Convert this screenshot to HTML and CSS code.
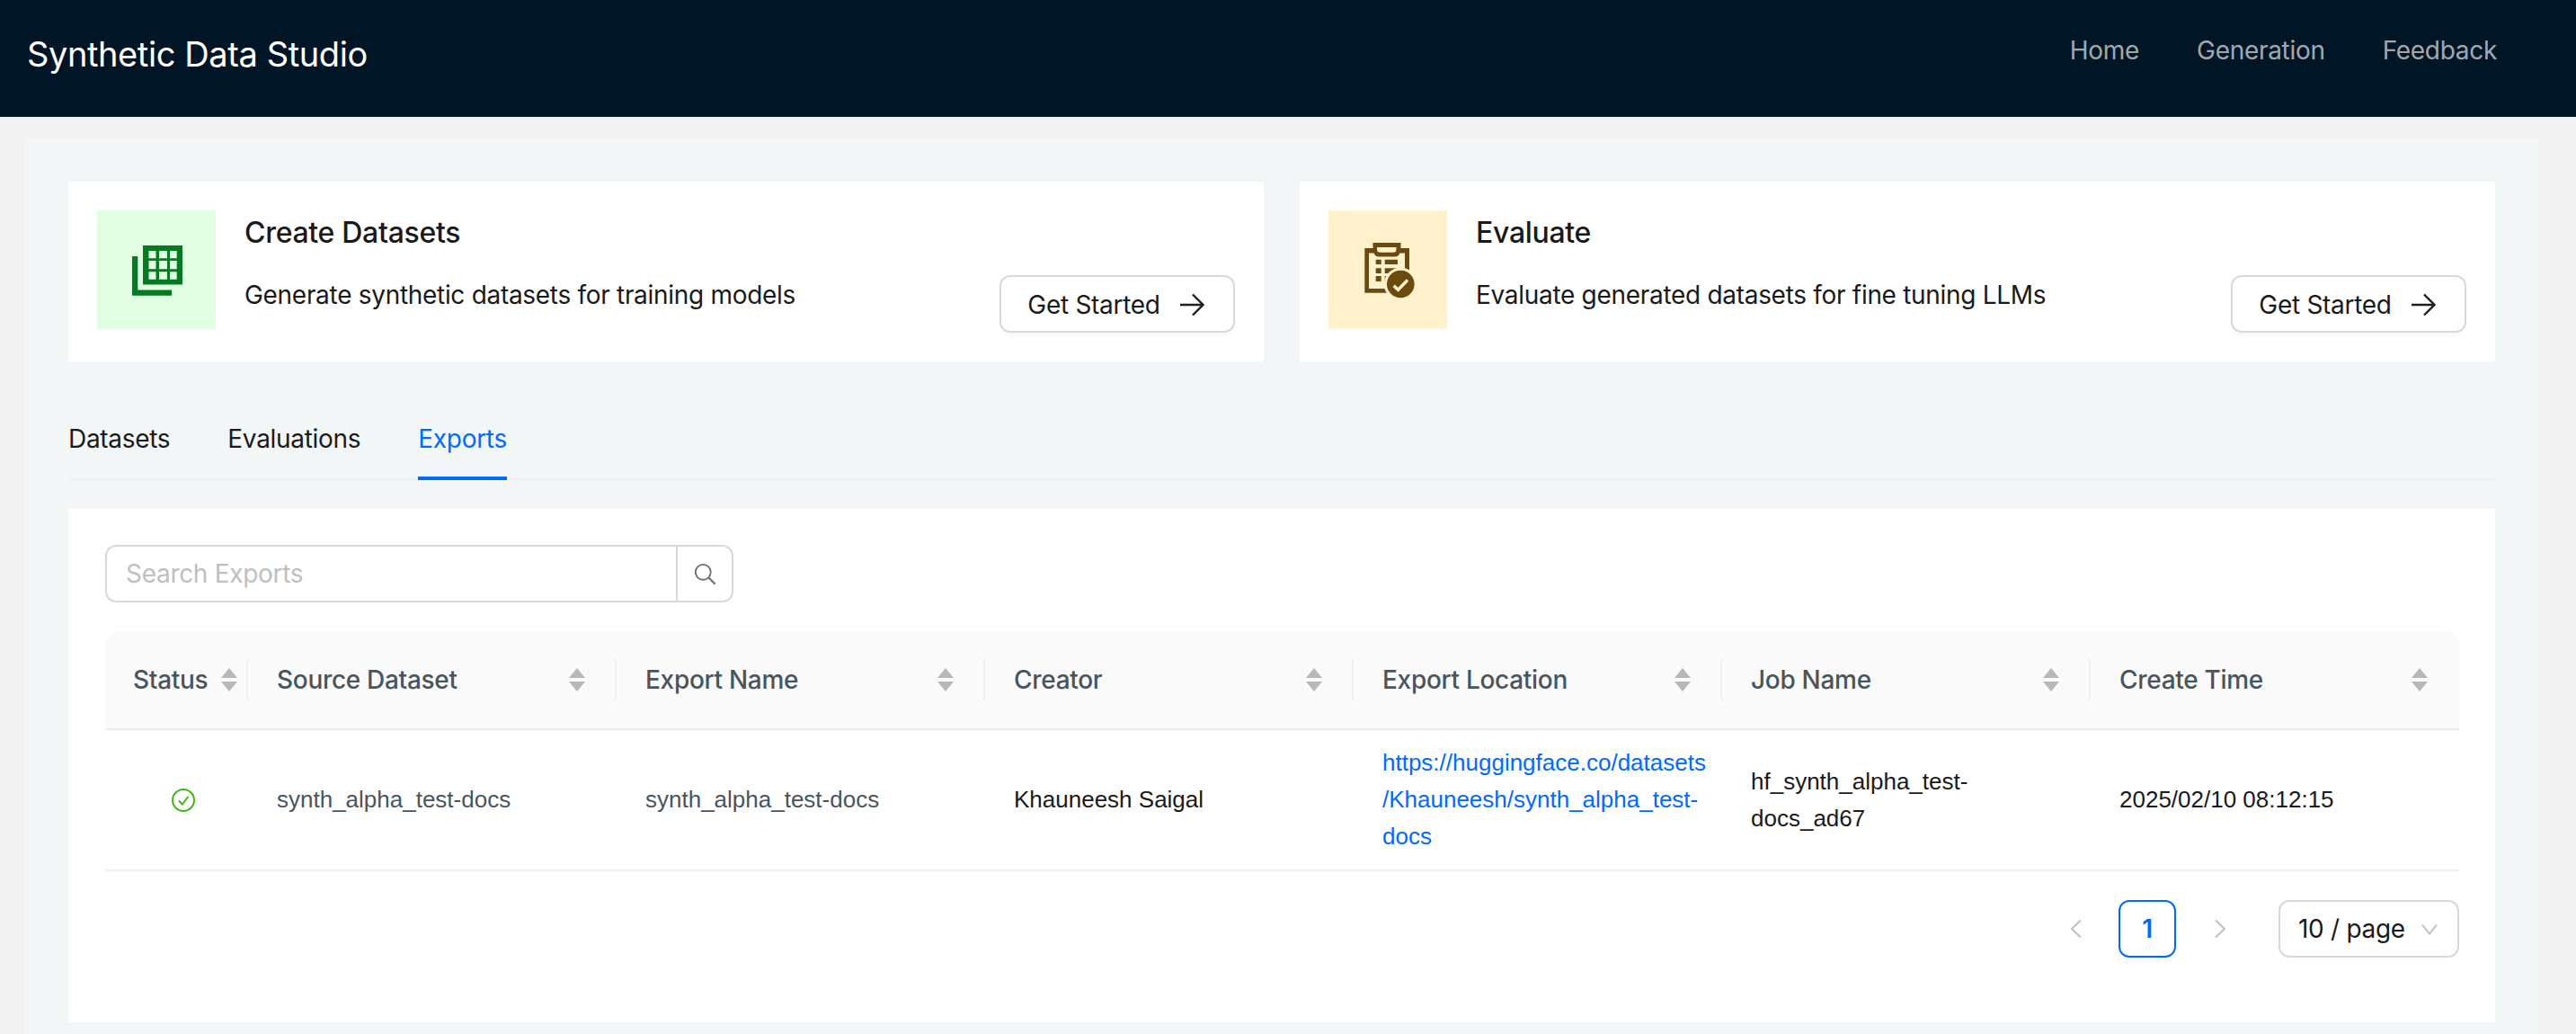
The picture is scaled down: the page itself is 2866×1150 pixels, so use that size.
FILE: index.html
```html
<!DOCTYPE html>
<html lang="en">
<head>
    <meta charset="UTF-8">
    <meta name="viewport" content="width=device-width, initial-scale=1.0">
    <title>Synthetic Data Studio</title>
    <link rel="stylesheet" href="styles.css">
</head>
<body>

    <!-- Top bar -->
    <header class="topbar">
        <div class="brand">Synthetic Data Studio</div>
        <nav class="topnav">
            <a>Home</a>
            <a>Generation</a>
            <a>Feedback</a>
        </nav>
    </header>

    <main class="content">

        <!-- Action cards -->
        <section class="cards">
            <div class="card">
                <div class="card-icon card-icon-green">
                    <svg viewBox="0 0 132 132" width="132" height="132">
                        <path fill="#067a23" fill-rule="evenodd" d="M51 39H95V82.500H51ZM57.500 45V53.300H65.500V45ZM69 45V53.300H78V45ZM81 45V53.300H88.700V45ZM57.500 56V65.300H65.500V56ZM69 56V65.300H78V56ZM81 56V65.300H88.700V56ZM57.500 68.300V76.700H65.500V68.300ZM69 68.300V76.700H78V68.300ZM81 68.300V76.700H88.700V68.300Z"/>
                        <path fill="#067a23" d="M39 51H45.300V88.500H83V94.800H39Z"/>
                    </svg>
                </div>
                <div class="card-text">
                    <h3 class="card-title">Create Datasets</h3>
                    <p class="card-desc">Generate synthetic datasets for training models</p>
                </div>
                <button class="start-btn">Get Started
                    <svg viewBox="0 0 28 28" width="28" height="28"><path fill="none" stroke="#1f1f1f" stroke-width="2.400" d="M1 14H26M15 2.500L26.500 14L15 25.500"/></svg>
                </button>
            </div>

            <div class="card">
                <div class="card-icon card-icon-yellow">
                    <svg viewBox="0 0 132 132" width="132" height="132">
                        <path fill="#6b4a10" fill-rule="evenodd" d="M49.500 36H80.500V42H90V91.800H40.300V42H49.500ZM54 41V43.500Q54 46.800 58 46.800H72Q75.500 46.800 75.500 43.500V41ZM45 47.500V87H85V47.500H79.500Q78 51.500 74 51.500H56Q52 51.500 50.500 47.500Z"/>
                        <path fill="#6b4a10" d="M52.700 54.700H58.700V60H52.700ZM62.700 54.700H77V60H62.700ZM52.700 64.300H58.700V70H52.700ZM62.700 64.300H77V70H62.700ZM52.700 73H58.700V79H52.700ZM62.700 73H70V79H62.700Z"/>
                        <circle cx="80.300" cy="82" r="18.500" fill="#fff1cc"/>
                        <circle cx="80.300" cy="82" r="15.300" fill="#6b4a10"/>
                        <path fill="none" stroke="#fff1cc" stroke-width="3.400" d="M72.700 83.800L77.500 88.300L88 77.500"/>
                    </svg>
                </div>
                <div class="card-text">
                    <h3 class="card-title">Evaluate</h3>
                    <p class="card-desc">Evaluate generated datasets for fine tuning LLMs</p>
                </div>
                <button class="start-btn">Get Started
                    <svg viewBox="0 0 28 28" width="28" height="28"><path fill="none" stroke="#1f1f1f" stroke-width="2.400" d="M1 14H26M15 2.500L26.500 14L15 25.500"/></svg>
                </button>
            </div>
        </section>

        <!-- Tabs -->
        <div class="tabs">
            <a class="tab">Datasets</a>
            <a class="tab">Evaluations</a>
            <a class="tab tab-active">Exports</a>
        </div>

        <!-- Exports panel -->
        <section class="panel">
            <div class="search">
                <input class="search-input" type="text" placeholder="Search Exports">
                <button class="search-btn">
                    <svg viewBox="0 0 28 28" width="25" height="25"><circle cx="11.500" cy="11.500" r="9.500" fill="none" stroke="#6e6e6e" stroke-width="2"/><path stroke="#6e6e6e" stroke-width="2.400" d="M18.500 18.500L26.500 26.500"/></svg>
                </button>
            </div>

            <table class="exports">
                <thead>
                    <tr>
                        <th class="col-status"><div class="th-inner">Status<span class="sorter"></span></div></th>
                        <th><div class="th-inner">Source Dataset<span class="sorter"></span></div></th>
                        <th><div class="th-inner">Export Name<span class="sorter"></span></div></th>
                        <th><div class="th-inner">Creator<span class="sorter"></span></div></th>
                        <th><div class="th-inner">Export Location<span class="sorter"></span></div></th>
                        <th><div class="th-inner">Job Name<span class="sorter"></span></div></th>
                        <th><div class="th-inner">Create Time<span class="sorter"></span></div></th>
                    </tr>
                </thead>
                <tbody>
                    <tr>
                        <td class="col-status">
                            <svg class="status-ok" viewBox="0 0 26 26" width="26" height="26"><circle cx="13" cy="13" r="12" fill="none" stroke="#3fb618" stroke-width="2"/><path fill="none" stroke="#3fb618" stroke-width="2" d="M8 13.500L11.800 17.500L18.500 9"/></svg>
                        </td>
                        <td class="muted">synth_alpha_test-docs</td>
                        <td class="muted">synth_alpha_test-docs</td>
                        <td>Khauneesh Saigal</td>
                        <td><a class="link">https://huggingface.co/datasets<br>/Khauneesh/synth_alpha_test-<br>docs</a></td>
                        <td>hf_synth_alpha_test-<br>docs_ad67</td>
                        <td>2025/02/10 08:12:15</td>
                    </tr>
                </tbody>
            </table>

            <div class="pager">
                <span class="pager-arrow">
                    <svg viewBox="0 0 14 22" width="14" height="22"><path fill="none" stroke="#bfbfbf" stroke-width="2" d="M12 1.500L2 11L12 20.500"/></svg>
                </span>
                <span class="pager-num">1</span>
                <span class="pager-arrow">
                    <svg viewBox="0 0 14 22" width="14" height="22"><path fill="none" stroke="#bfbfbf" stroke-width="2" d="M2 1.500L12 11L2 20.500"/></svg>
                </span>
                <div class="page-size">10 / page
                    <svg viewBox="0 0 18 13" width="18" height="13"><path fill="none" stroke="#bfbfbf" stroke-width="2" d="M1 1.500L9 11.500L17 1.500"/></svg>
                </div>
            </div>
        </section>
    </main>

</body>
</html>
```

FILE: styles.css
```css
* {
    box-sizing: border-box;
}

body {
    margin: 0;
    background-color: #f2f2f2;
    font-family: Inter, "Liberation Sans", sans-serif;
    font-size: 28px;
    letter-spacing: -0.3px;
    color: #1a1a1a;
    height: 1150px;
    overflow: hidden;
}

.topbar {
    height: 130px;
    background-color: #001525;
    display: flex;
    justify-content: space-between;
    padding: 0 88px 0 30px;
}

.brand {
    color: #fff;
    font-size: 38px;
    letter-spacing: -0.4px;
    line-height: 120px;
}

.topnav {
    display: flex;
    gap: 64px;
    line-height: 112px;
    color: rgba(255, 255, 255, 0.65);
}

.content {
    margin: 24px 42px 0 27px;
    padding: 48px 48px 40px 49px;
    background-color: #f3f6f7;
}

.cards {
    display: grid;
    grid-template-columns: 1fr 1fr;
    gap: 40px;
}

.card {
    height: 200px;
    background: #fff;
    padding: 32px;
    display: flex;
}

.card-icon {
    width: 132px;
    height: 132px;
    flex: none;
}

.card-icon svg {
    display: block;
}

.card-icon-green {
    background-color: #e1ffe3;
}

.card-icon-yellow {
    background-color: #fff1cc;
}

.card-text {
    flex: 1;
    padding: 3px 0 0 32px;
}

.card-title {
    margin: 0 0 25px;
    font-size: 32px;
    font-weight: 500;
    line-height: 44px;
}

.card-desc {
    margin: 0;
    line-height: 44px;
}

.start-btn {
    align-self: flex-end;
    height: 64px;
    width: 262px;
    background: #fff;
    border: 2px solid #d9d9d9;
    border-radius: 12px;
    box-shadow: 0 4px 0 rgba(0, 0, 0, 0.02);
    font: inherit;
    letter-spacing: inherit;
    color: inherit;
    display: flex;
    align-items: center;
    justify-content: center;
    gap: 21px;
    padding: 2px 3px 0 0;
}

.tabs {
    display: flex;
    gap: 64px;
    margin-top: 40px;
    height: 92px;
    border-bottom: 2px solid #f0f0f0;
    align-items: flex-end;
}

.tab {
    line-height: 44px;
    padding-bottom: 20px;
    margin-bottom: -2px;
    border-bottom: 4px solid transparent;
}

.tab-active {
    color: #006aff;
    border-bottom-color: #006aff;
}

.panel {
    margin-top: 32px;
    background: #fff;
    padding: 40px 40px 72px 41px;
}

.search {
    display: flex;
    width: 699px;
    height: 64px;
}

.search-input {
    flex: 1;
    min-width: 0;
    height: 64px;
    border: 2px solid #d9d9d9;
    border-right: none;
    border-radius: 12px 0 0 12px;
    padding: 0 21px;
    font: inherit;
    letter-spacing: inherit;
    outline: none;
}

.search-input::placeholder {
    color: #bfbfbf;
}

.search-btn {
    width: 64px;
    height: 64px;
    background: #fff;
    border: 2px solid #d9d9d9;
    border-radius: 0 12px 12px 0;
    padding: 0;
    display: flex;
    align-items: center;
    justify-content: center;
}

.exports {
    width: 100%;
    margin-top: 32px;
    border-collapse: separate;
    border-spacing: 0;
    table-layout: fixed;
}

.exports th {
    position: relative;
    height: 110px;
    padding: 0 32px;
    background-color: #fafafa;
    border-bottom: 2px solid #ebebeb;
    color: #48555f;
    font-weight: 500;
    font-size: 28px;
    text-align: left;
}

.exports th:first-child {
    border-top-left-radius: 16px;
}

.exports th:last-child {
    border-top-right-radius: 16px;
}

/* column separator */
.exports th:not(:last-child)::after {
    content: "";
    position: absolute;
    right: 0;
    top: 32px;
    height: 44px;
    width: 2px;
    background-color: #f0f0f0;
}

.col-status {
    width: 159px;
}

.exports th.col-status {
    padding: 0 9px 0 31px;
}

.th-inner {
    display: flex;
    align-items: center;
    justify-content: space-between;
}

.sorter {
    width: 18px;
    height: 26px;
    flex: none;
    display: flex;
    flex-direction: column;
    justify-content: space-between;
    margin-right: 3px;
}

.sorter::before,
.sorter::after {
    content: "";
    border-left: 9px solid transparent;
    border-right: 9px solid transparent;
}

.sorter::before {
    border-bottom: 11px solid #b8b8b8;
}

.sorter::after {
    border-top: 11px solid #b8b8b8;
}

.exports td {
    height: 157px;
    padding: 16px 16px 16px 32px;
    border-bottom: 2px solid #f0f0f0;
    font-family: "Liberation Sans", sans-serif;
    font-size: 26px;
    letter-spacing: 0;
    line-height: 41px;
}

.exports td.muted {
    color: #48555f;
}

.status-ok {
    display: block;
    margin-left: 42px;
}

.link {
    color: #006aff;
}

.pager {
    display: flex;
    justify-content: flex-end;
    align-items: center;
    gap: 16px;
    margin-top: 32px;
}

.pager-arrow {
    width: 64px;
    height: 64px;
    display: flex;
    align-items: center;
    justify-content: center;
    padding-left: 2px;
}

.pager-num {
    width: 64px;
    height: 64px;
    border: 2px solid #006aff;
    border-radius: 12px;
    color: #006aff;
    font-weight: 600;
    text-align: center;
    line-height: 60px;
}

.page-size {
    width: 201px;
    height: 64px;
    margin-left: 18px;
    border: 2px solid #d9d9d9;
    border-radius: 12px;
    padding: 0 22px 0 20px;
    display: flex;
    align-items: center;
    justify-content: space-between;
}
```
